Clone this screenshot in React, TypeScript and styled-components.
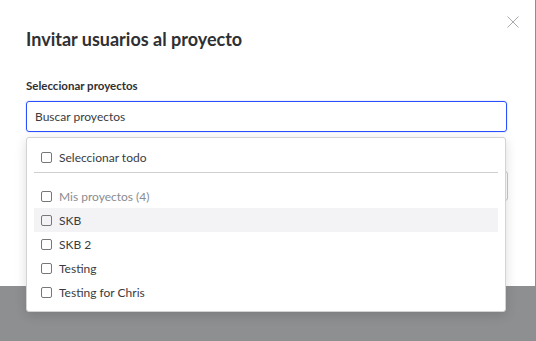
import styled, { createGlobalStyle } from "styled-components";

const GlobalStyle = createGlobalStyle`
  html, body {
    margin: 0;
    padding: 0;
    background: #8e8f91;
    font-family: Lato, "Open Sans", sans-serif;
  }
`;

const Page = styled.div`
  width: 536px;
  height: 341px;
  overflow: hidden;
  background: #8e8f91;
`;

const Modal = styled.div`
  position: relative;
  box-sizing: border-box;
  width: 535px;
  height: 286px;
  background: #ffffff;
  padding: 27px 28px 0 26px;
`;

const CloseButton = styled.button`
  position: absolute;
  top: 15px;
  right: 15px;
  width: 14px;
  height: 14px;
  padding: 0;
  border: none;
  background: none;
  display: flex;
`;

const Title = styled.h2`
  margin: 0;
  font-size: 18px;
  line-height: 24px;
  font-weight: 700;
  color: #2f3033;
`;

const Field = styled.div<{ $gap: number }>`
  margin-top: ${(p) => p.$gap}px;
`;

const Label = styled.div`
  font-size: 11.5px;
  line-height: 16px;
  font-weight: 700;
  color: #2f3033;
  margin-bottom: 7px;
`;

const Combo = styled.div`
  position: relative;
`;

const SearchInput = styled.div`
  box-sizing: border-box;
  height: 31px;
  border: 1px solid #2a4fff;
  border-radius: 3px;
  box-shadow: 0 0 0 1px rgba(42, 79, 255, 0.08);
  padding: 0 8px;
  display: flex;
  align-items: center;
  font-size: 12px;
  color: #3a3b3e;
`;

const SelectBox = styled.div`
  box-sizing: border-box;
  width: 482px;
  height: 30px;
  border: 1px solid #c9c9cc;
  border-radius: 3px;
`;

const Dropdown = styled.div`
  position: absolute;
  top: 36px;
  left: 0;
  z-index: 2;
  box-sizing: border-box;
  width: 480px;
  padding: 7px;
  background: #ffffff;
  border: 1px solid #d3d3d6;
  border-radius: 3px;
  box-shadow: 0 3px 12px rgba(0, 0, 0, 0.14);
`;

const Row = styled.div<{ $active?: boolean; $muted?: boolean }>`
  height: 24px;
  display: flex;
  align-items: center;
  gap: 7px;
  padding: 0 7px;
  font-size: 12px;
  color: ${(p) => (p.$muted ? "#8a8b8f" : "#3a3b3e")};
  background: ${(p) => (p.$active ? "#f3f3f5" : "transparent")};
`;

const Check = styled.span`
  box-sizing: border-box;
  width: 11px;
  height: 11px;
  border: 1px solid #76777b;
  border-radius: 2px;
  flex-shrink: 0;
`;

const Divider = styled.div`
  height: 1px;
  background: #cfcfd2;
  margin: 3px 0 11px;
`;

const projects = ["SKB", "SKB 2", "Testing", "Testing for Chris"];

export default function App() {
  return (
    <Page>
      <GlobalStyle />
      <Modal>
        <CloseButton aria-label="Cerrar">
          <svg width="14" height="14" viewBox="0 0 14 14">
            <path d="M1.5 1.5 L12.5 12.5 M12.5 1.5 L1.5 12.5" stroke="#a9aaad" strokeWidth="1" fill="none" />
          </svg>
        </CloseButton>
        <Title>Invitar usuarios al proyecto</Title>
        <Field $gap={27}>
          <Label>Seleccionar proyectos</Label>
          <Combo>
            <SearchInput>Buscar proyectos</SearchInput>
            <Dropdown>
              <Row>
                <Check />
                Seleccionar todo
              </Row>
              <Divider />
              <Row $muted>
                <Check />
                Mis proyectos (4)
              </Row>
              {projects.map((name, i) => (
                <Row key={name} $active={i === 0}>
                  <Check />
                  {name}
                </Row>
              ))}
            </Dropdown>
          </Combo>
        </Field>
        <Field $gap={39}>
          <SelectBox />
        </Field>
      </Modal>
    </Page>
  );
}
